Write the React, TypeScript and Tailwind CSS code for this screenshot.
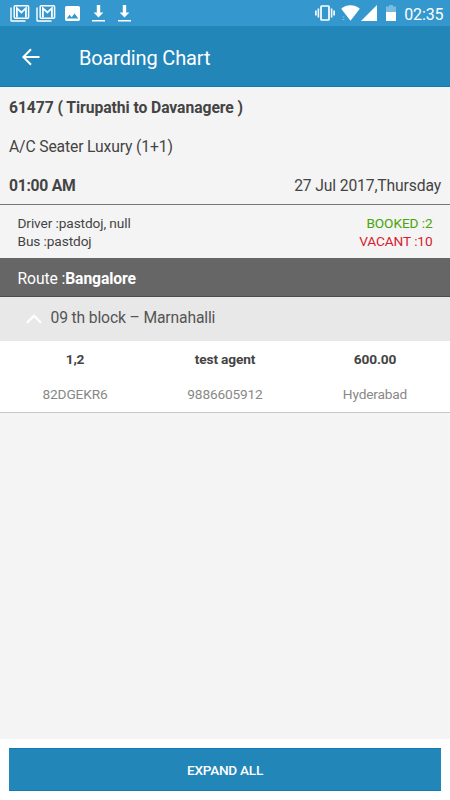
import type { ReactNode } from "react";

const passengers = [
  {
    seats: "1,2",
    agent: "test agent",
    fare: "600.00",
    pnr: "82DGEKR6",
    phone: "9886605912",
    city: "Hyderabad",
  },
];

function MailStackIcon() {
  return (
    <svg width="20" height="18" viewBox="0 0 20 18" className="shrink-0">
      <path d="M1 2.5V15.6Q1 16 1.4 16H15.5" fill="none" stroke="#fff" strokeWidth="1.4" />
      <rect x="4.2" y="0.8" width="14.4" height="12.4" rx="1" fill="none" stroke="#fff" strokeWidth="1.5" />
      <path d="M6.9 12.5V3.2L11.4 7.4L15.9 3.2V12.5" fill="none" stroke="#fff" strokeWidth="1.8" />
    </svg>
  );
}

function ImageIcon() {
  return (
    <svg width="15" height="15" viewBox="3 3 18 18" className="shrink-0" fill="#fff">
      <path d="M21 19V5c0-1.1-.9-2-2-2H5c-1.1 0-2 .9-2 2v14c0 1.1.9 2 2 2h14c1.1 0 2-.9 2-2zM8.5 13.5l2.5 3.01L14.5 12l4.5 6H5l3.5-4.5z" />
    </svg>
  );
}

function DownloadIcon() {
  return (
    <svg width="13" height="17" viewBox="0 0 13 17" className="shrink-0" fill="#fff">
      <path d="M4.8 0H8.2V7.4H11.4L6.5 12.6L1.6 7.4H4.8Z" />
      <path d="M0 15H13V16.5H0Z" />
    </svg>
  );
}

function VibrateIcon() {
  return (
    <svg width="20" height="16" viewBox="0 0 20 16" className="shrink-0" fill="none" stroke="#fff" strokeWidth="1.7">
      <rect x="6" y="1" width="8" height="14" rx="0.8" />
      <path d="M3.4 3.5V12.5M16.6 3.5V12.5M0.9 5.5V10.5M19.1 5.5V10.5" strokeWidth="1.6" />
    </svg>
  );
}

function StatusBar() {
  return (
    <div className="flex h-[26px] items-start bg-[#3498cf] text-white">
      <div className="flex pt-[5px] pl-[10px]">
        <MailStackIcon />
        <div className="w-[6px]" />
        <MailStackIcon />
        <div className="w-[9px]" />
        <div className="pt-px">
          <ImageIcon />
        </div>
        <div className="w-[12px]" />
        <DownloadIcon />
        <div className="w-[13px]" />
        <DownloadIcon />
      </div>
      <div className="ml-auto flex pt-[5px] pr-[6.5px]">
        <VibrateIcon />
        <svg width="19" height="16" viewBox="0 0 19 16" className="ml-[6px] shrink-0" fill="#fff">
          <path d="M0.2 3.8C5.5 -0.8 13.5 -0.8 18.8 3.8L9.5 15.8Z" />
          <path d="M1.5 11.5H3.5V12.5H1.5ZM1.5 14H3.5V15H1.5Z" fillOpacity="0.4" />
        </svg>
        <svg width="16" height="16" viewBox="0 0 16 16" className="ml-[1px] shrink-0" fill="#fff">
          <path d="M16 0V16H0Z" />
        </svg>
        <svg width="10" height="16" viewBox="0 0 10 16" className="ml-[9px] shrink-0" fill="#fff">
          <path d="M0 7V1.5H3V0H7V1.5H10V7Z" fillOpacity="0.35" />
          <path d="M0 7H10V16H0Z" />
        </svg>
        <span className="ml-[8px] text-[16px] leading-[19px] tracking-[-0.1px]">02:35</span>
      </div>
    </div>
  );
}

function Header() {
  return (
    <header className="flex h-[61px] items-center border-b border-[#0f7cb8] bg-[#2386b9] pl-[22px] text-white">
      <svg width="18" height="18" viewBox="0 0 18 18" className="mt-[2px]" fill="none" stroke="#fff" strokeWidth="2">
        <path d="M17.5 9H2M9 1.2L1.4 9L9 16.8" />
      </svg>
      <h1 className="ml-[39px] pt-[3px] text-[20px] leading-6 tracking-[-0.15px]">Boarding Chart</h1>
    </header>
  );
}

function Cell({ children }: { children: ReactNode }) {
  return <span className="flex-1 text-center">{children}</span>;
}

export default function App() {
  return (
    <div className="flex h-[800px] w-[450px] flex-col overflow-hidden bg-[#f4f4f4] font-['Roboto','Liberation_Sans',sans-serif] text-[#444]">
      <StatusBar />
      <Header />

      <section className="h-[118px] border-b border-[#777] px-[9px] pt-[11px] text-[15.7px] leading-5 tracking-[-0.14px]">
        <p className="font-bold tracking-[-0.07px]">61477 ( Tirupathi to Davanagere )</p>
        <p className="mt-[19px]">A/C Seater Luxury (1+1)</p>
        <div className="mt-[19px] flex justify-between">
          <span className="font-bold tracking-[-0.27px]">01:00 AM</span>
          <span>27 Jul 2017,Thursday</span>
        </div>
      </section>

      <section className="flex h-[53px] justify-between px-[17.5px] pt-[9px] text-[13.7px] leading-[18px] tracking-[-0.11px]">
        <div>
          <p>Driver :pastdoj, null</p>
          <p>Bus :pastdoj</p>
        </div>
        <div className="text-right">
          <p className="text-[#4aa50a]">BOOKED :2</p>
          <p className="text-[#d8202f]">VACANT :10</p>
        </div>
      </section>

      <div className="h-[39px] border-b border-[#4c4c4c] bg-[#666] pt-[11px] pl-[17.5px] text-[15.7px] leading-5 tracking-[-0.1px] text-white">
        Route :<b>Bangalore</b>
      </div>

      <div className="flex h-[44px] bg-[#e8e8e8] pt-[11px] pl-[26px] text-[15.7px] leading-5 tracking-[-0.15px] text-[#555]">
        <svg width="16" height="10" viewBox="0 0 16 10" className="mt-[6px]" fill="none" stroke="#fff" strokeWidth="2.2">
          <path d="M1 8.8L8 1.8L15 8.8" />
        </svg>
        <span className="ml-[8.5px]">09 th block – Marnahalli</span>
      </div>

      {passengers.map((p) => (
        <div key={p.pnr} className="h-[72px] border-b border-[#c8c8c8] bg-white pt-[9px] text-[13.7px] leading-[18px] tracking-[-0.16px]">
          <div className="flex font-bold">
            <Cell>{p.seats}</Cell>
            <Cell>{p.agent}</Cell>
            <Cell>{p.fare}</Cell>
          </div>
          <div className="mt-[17px] flex text-[#888]">
            <Cell>{p.pnr}</Cell>
            <Cell>{p.phone}</Cell>
            <Cell>{p.city}</Cell>
          </div>
        </div>
      ))}

      <footer className="mt-auto h-[61px] bg-white px-[9px] pt-[9px]">
        <button className="h-[43px] w-full border-y border-[#0f7cb8] bg-[#2386b9] pt-px text-[13.6px] font-medium tracking-[-0.25px] text-white">
          EXPAND ALL
        </button>
      </footer>
    </div>
  );
}
